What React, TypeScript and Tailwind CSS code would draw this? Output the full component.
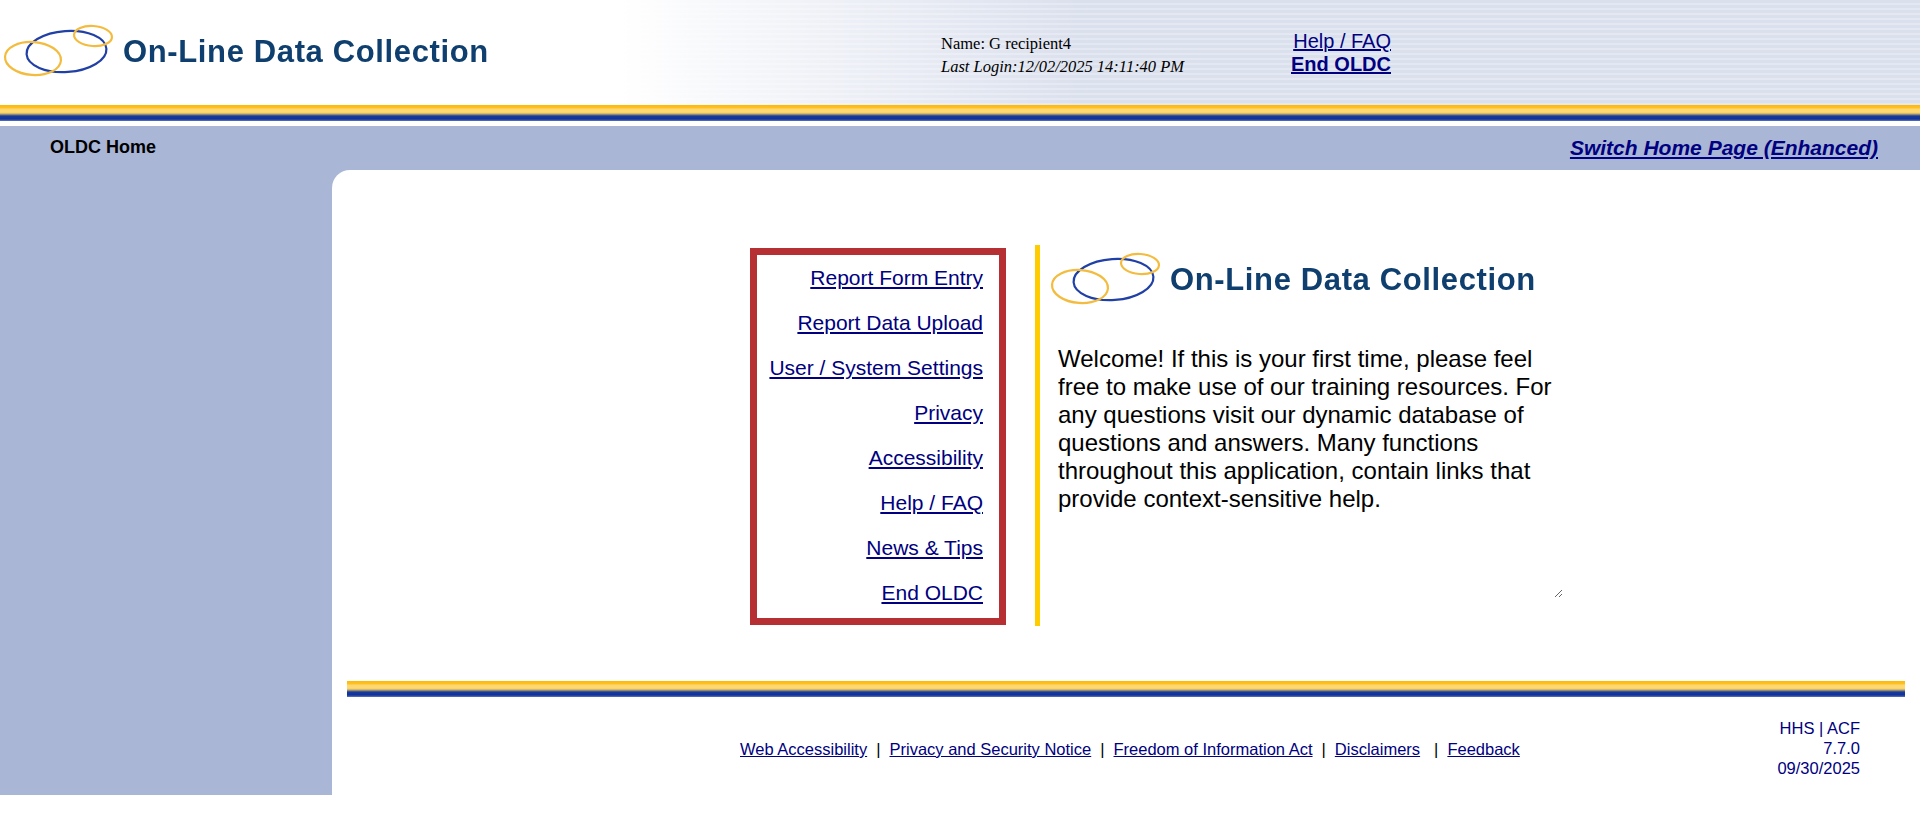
const menuLinks = [
  "Report Form Entry",
  "Report Data Upload",
  "User / System Settings",
  "Privacy",
  "Accessibility",
  "Help / FAQ",
  "News & Tips",
  "End OLDC",
]

function Stripe() {
  return (
    <div className="h-4 bg-[linear-gradient(180deg,#ffb900_0px,#ffc02a_3px,#ffd872_4px,#ffd872_7px,#f5cc66_8px,#b7a263_9px,#64708a_10px,#173a9c_11px,#11319b_14px,#5f78b8_16px)]" />
  )
}

function Logo() {
  return (
    <div className="flex items-center gap-[3px] blur-[0.3px]">
      <svg viewBox="0 20 120 60" className="h-[60px] w-[120px]" fill="none" strokeWidth="2.2">
        <ellipse cx="66.5" cy="51.5" rx="40" ry="20.5" stroke="#2040a6" transform="rotate(-4 66.5 51.5)" />
        <ellipse cx="33" cy="58.5" rx="28" ry="16.5" stroke="#f3bc3e" transform="rotate(4 33 58.5)" />
        <ellipse cx="93" cy="36" rx="19" ry="10" stroke="#f3bc3e" transform="rotate(4 93 36)" />
      </svg>
      <span className="mt-[5px] font-bold text-[#0f3f6e] whitespace-nowrap text-[31px] tracking-[0.63px]">On-Line Data Collection</span>
    </div>
  )
}

export default function App() {
  return (
    <div className="font-['Liberation_Sans',Arial,sans-serif] text-black bg-white min-h-[827px]">
      <header className="h-[105px] flex bg-[linear-gradient(90deg,#fff_620px,rgba(255,255,255,0)_1080px),repeating-linear-gradient(180deg,#dbe0ed_0px,#dbe0ed_3px,#e4e8f2_3px,#e4e8f2_5px)]">
        <div className="w-[941px] pt-[20px]">
          <Logo />
        </div>
        <div className="w-[290px] pt-[32px] font-['Liberation_Serif',Georgia,serif] text-[16.5px] leading-[23px]">
          <div>Name: G recipient4</div>
          <div className="italic">Last Login:12/02/2025 14:11:40 PM</div>
        </div>
        <div className="w-[160px] pt-[30px] flex flex-col items-end text-[20px] leading-[23px] text-[#000080]">
          <a href="#" className="underline">Help / FAQ</a>
          <a href="#" className="underline font-bold">End OLDC</a>
        </div>
      </header>
      <Stripe />
      <div className="mt-[5px] h-[669px] bg-[#a9b6d6] flex flex-col">
        <div className="h-[44px] flex justify-between items-center pl-[50px] pr-[42px]">
          <span className="font-bold text-[18px] -mt-[2px]">OLDC Home</span>
          <a href="#" className="underline font-bold italic text-[21px] text-[#000080]">Switch Home Page (Enhanced)</a>
        </div>
        <div className="flex-1 flex">
          <div className="w-[332px]" />
          <main className="flex-1 bg-white rounded-tl-[18px] flex flex-col">
            <div className="h-[511px] pt-[75px] pl-[418px] flex items-start">
              <nav className="mt-[3px] w-[256px] h-[377px] border-[7px] border-[#b52f33] pr-[16px] flex flex-col items-end text-[21px] text-[#000080]">
                {menuLinks.map((link) => (
                  <a key={link} href="#" className="h-[45px] leading-[45px] underline">{link}</a>
                ))}
              </nav>
              <div className="ml-[29px] h-[381px] border-l-[5px] border-[#ffcc00] pl-[7px] pt-[3px]">
                <Logo />
                <textarea
                  readOnly
                  className="block -ml-[2px] mt-[37px] w-[518px] h-[253px] pl-[13px] pr-[5px] text-[24px] leading-[28px] outline-none border-0"
                  value="Welcome! If this is your first time, please feel free to make use of our training resources. For any questions visit our dynamic database of questions and answers. Many functions throughout this application, contain links that provide context-sensitive help."
                />
              </div>
            </div>
            <div className="pr-[15px] pl-[15px]">
              <Stripe />
            </div>
            <div className="pr-[60px] pl-[408px] pt-[21px] flex justify-between text-[16.5px] leading-[20px]">
              <div className="pt-[21px] flex whitespace-nowrap">
                <a href="#" className="underline text-[#000080]">Web Accessibility</a>
                <span className="mx-[9px]">|</span>
                <a href="#" className="underline text-[#000080]">Privacy and Security Notice</a>
                <span className="mx-[9px]">|</span>
                <a href="#" className="underline text-[#000080]">Freedom of Information Act</a>
                <span className="mx-[9px]">|</span>
                <a href="#" className="underline text-[#000080]">Disclaimers</a>
                <span className="ml-[14px] mr-[9px]">|</span>
                <a href="#" className="underline text-[#000080]">Feedback</a>
              </div>
              <div className="text-right text-[#000080]">
                <div>HHS | ACF</div>
                <div>7.7.0</div>
                <div>09/30/2025</div>
              </div>
            </div>
          </main>
        </div>
      </div>
    </div>
  )
}
